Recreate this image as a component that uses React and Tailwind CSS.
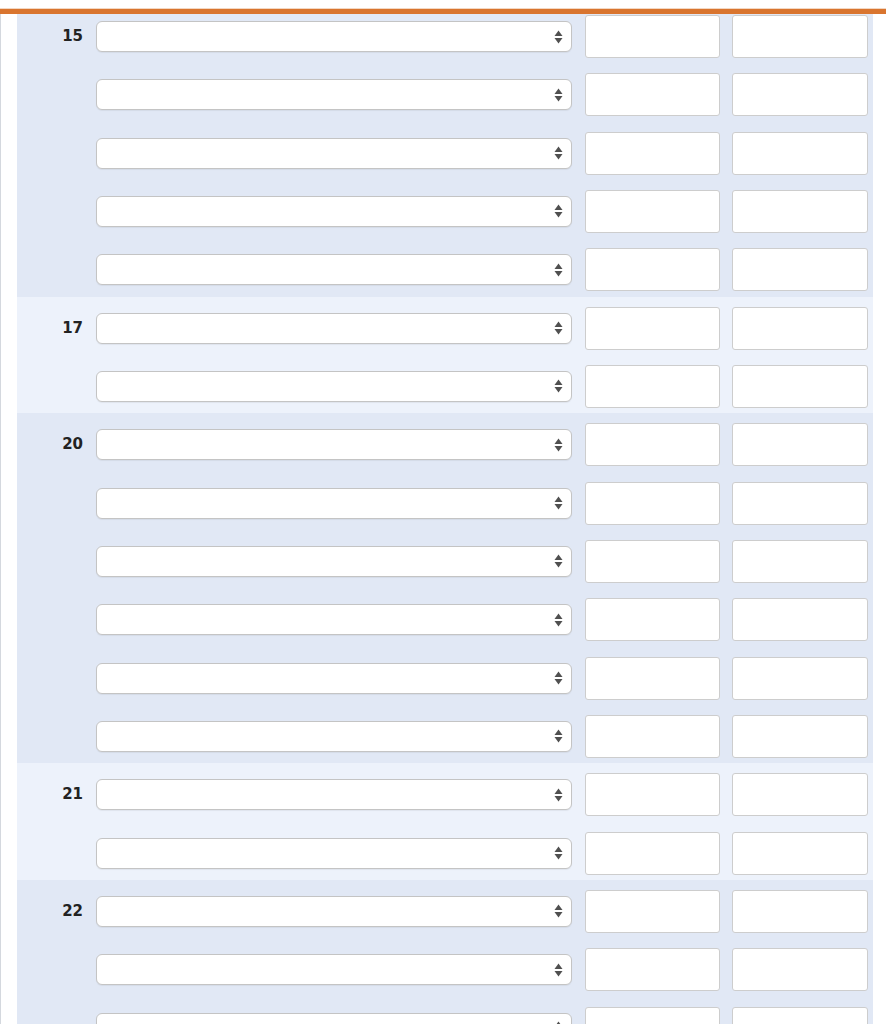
const groups = [
  { label: "15", rows: 5, tone: "bg-[#e1e8f5]" },
  { label: "17", rows: 2, tone: "bg-[#edf2fb]" },
  { label: "20", rows: 6, tone: "bg-[#e1e8f5]" },
  { label: "21", rows: 2, tone: "bg-[#edf2fb]" },
  { label: "22", rows: 3, tone: "bg-[#e1e8f5]" },
];

const Arrows = () => (
  <svg width="9" height="14" viewBox="0 0 9 14" className="absolute right-[8px] top-1/2 -translate-y-1/2">
    <path d="M4.5 0.5 L8.5 6 L0.5 6 Z" fill="#505050" />
    <path d="M4.5 13.5 L8.5 8 L0.5 8 Z" fill="#505050" />
  </svg>
);

const Row = ({ label }) => (
  <div className="flex items-center h-[58.33px] pt-[10px] pb-[5.33px]">
    <div className="w-[79px] pr-[13px] text-right text-[15px] font-bold text-[#222] leading-none">
      {label}
    </div>
    <div className="relative w-[476px] h-[31px] bg-white border border-[#c4c4c4] rounded-[6px] shadow-[0_1px_1px_rgba(0,0,0,0.06)]">
      <Arrows />
    </div>
    <div className="ml-[13px] w-[135px] h-[43px] bg-white border border-[#cdcdcd] rounded-[3px]" />
    <div className="ml-[12px] w-[136px] h-[43px] bg-white border border-[#cdcdcd] rounded-[3px]" />
  </div>
);

export default function App() {
  return (
    <div
      className="relative w-[886px] h-[1024px] overflow-hidden bg-white"
      style={{ fontFamily: '"DejaVu Sans", "Liberation Sans", sans-serif' }}
    >
      {/* fixed header strip over the scrolled table */}
      <div className="absolute top-0 left-0 right-0 z-10">
        <div className="h-[8px] bg-white" />
        <div className="h-[1px] bg-[#f3d7c2]" />
        <div className="h-[5px] bg-[#d9752f]" />
      </div>

      <div className="flex pt-[5px]">
        <div className="w-[17px] shrink-0 border-l border-[#d4d8de]" />
        <div className="w-[856px]">
          {groups.map((g) => (
            <div key={g.label} className={g.tone}>
              {Array.from({ length: g.rows }).map((_, i) => (
                <Row key={i} label={i === 0 ? g.label : ""} />
              ))}
            </div>
          ))}
        </div>
      </div>
    </div>
  );
}
